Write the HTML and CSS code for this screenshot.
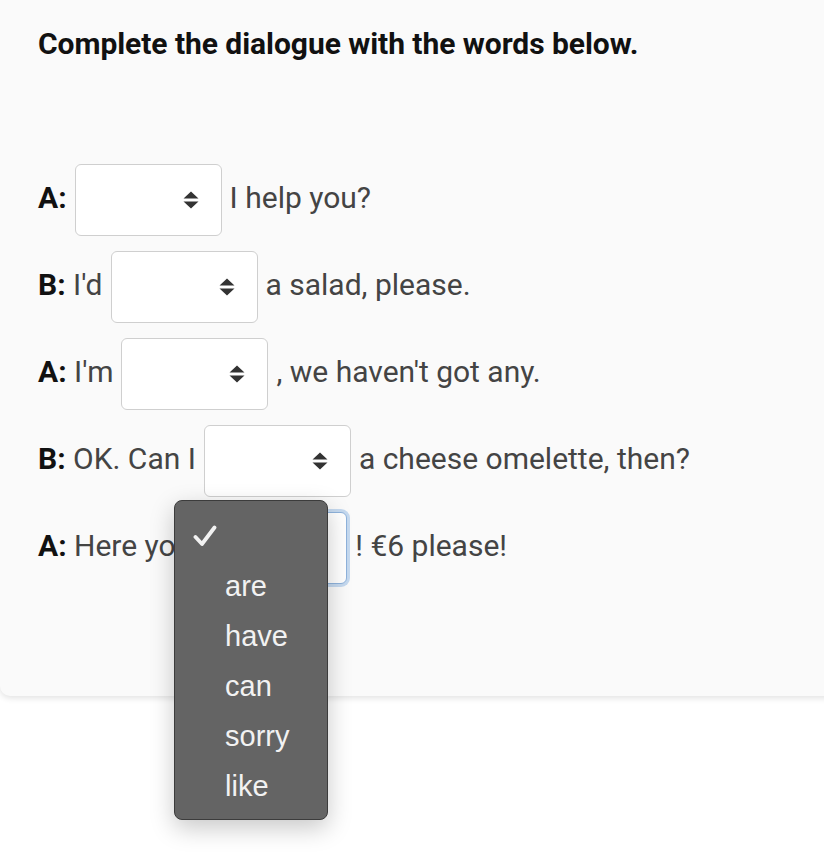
FILE: index.html
```html
<!DOCTYPE html>
<html>
<head>
<meta charset="utf-8">
<link rel="stylesheet" href="styles.css">
</head>
<body>
<div class="card">
  <h1 class="title">Complete the dialogue with the words below.</h1>
  <div class="dialogue">
    <div class="line"><span class="txt"><b>A:</b></span><span class="sel"><svg class="arr" viewBox="0 0 16 18" width="16" height="18"><path d="M8 0.5 L15.5 7.5 H0.5 Z M8 17.5 L15.5 10.5 H0.5 Z" fill="#333"/></svg></span><span class="txt">I help you?</span></div>
    <div class="line"><span class="txt"><b>B:</b> I'd</span><span class="sel"><svg class="arr" viewBox="0 0 16 18" width="16" height="18"><path d="M8 0.5 L15.5 7.5 H0.5 Z M8 17.5 L15.5 10.5 H0.5 Z" fill="#333"/></svg></span><span class="txt">a salad, please.</span></div>
    <div class="line"><span class="txt"><b>A:</b> I'm</span><span class="sel"><svg class="arr" viewBox="0 0 16 18" width="16" height="18"><path d="M8 0.5 L15.5 7.5 H0.5 Z M8 17.5 L15.5 10.5 H0.5 Z" fill="#333"/></svg></span><span class="txt">, we haven't got any.</span></div>
    <div class="line"><span class="txt"><b>B:</b> OK. Can I</span><span class="sel"><svg class="arr" viewBox="0 0 16 18" width="16" height="18"><path d="M8 0.5 L15.5 7.5 H0.5 Z M8 17.5 L15.5 10.5 H0.5 Z" fill="#333"/></svg></span><span class="txt">a cheese omelette, then?</span></div>
    <div class="line"><span class="txt"><b>A:</b> Here you</span><span class="sel focus"><svg class="arr" viewBox="0 0 16 18" width="16" height="18"><path d="M8 0.5 L15.5 7.5 H0.5 Z M8 17.5 L15.5 10.5 H0.5 Z" fill="#333"/></svg></span><span class="txt">! €6 please!</span></div>
  </div>
</div>
<div class="menu">
  <div class="opt check"><svg viewBox="0 0 24 22" width="24" height="22"><path d="M2.5 12 L9 19 L21.5 2.5" fill="none" stroke="#f2f2f2" stroke-width="3.8" stroke-linecap="round" stroke-linejoin="round"/></svg></div>
  <div class="opt">are</div>
  <div class="opt">have</div>
  <div class="opt">can</div>
  <div class="opt">sorry</div>
  <div class="opt">like</div>
</div>
</body>
</html>
```

FILE: styles.css
```css
html, body {
  margin: 0;
  padding: 0;
  background: #ffffff;
}
body {
  font-family: Roboto, "Liberation Sans", sans-serif;
  width: 824px;
  height: 854px;
  overflow: hidden;
  position: relative;
}
.card {
  background: #fafafa;
  margin-right: -40px;
  height: 696px;
  box-sizing: border-box;
  border-bottom-left-radius: 10px;
  box-shadow: 0 2px 6px rgba(0,0,0,0.12);
  padding: 25px 0 0 38px;
}
.title {
  margin: 0;
  font-size: 30px;
  font-weight: 700;
  color: #111;
  line-height: 38px;
  letter-spacing: -0.05px;
}
.dialogue {
  margin-top: 101px;
  display: flex;
  flex-direction: column;
  gap: 15px;
}
.line {
  display: flex;
  align-items: center;
  height: 72px;
  font-size: 30px;
  color: #444;
  white-space: pre;
}
.txt {
  position: relative;
  top: -3px;
}
.txt b {
  color: #111;
  font-weight: 700;
}
.sel {
  display: inline-flex;
  align-items: center;
  justify-content: flex-end;
  box-sizing: border-box;
  width: 147px;
  height: 72px;
  margin: 0 8px;
  border: 1.5px solid #cfcfcf;
  border-radius: 6px;
  background: #fff;
  padding-right: 22px;
}
.sel.focus {
  border-color: #8fb3dc;
  box-shadow: 0 0 0 3px #c5d9ef;
}
.menu {
  position: absolute;
  left: 174px;
  top: 500px;
  width: 154px;
  height: 320px;
  box-sizing: border-box;
  background: #646464;
  border: 1px solid #3c3c3c;
  border-radius: 8px;
  box-shadow: 0 8px 24px rgba(0,0,0,0.22);
  padding-top: 10px;
  font-family: "Liberation Sans", Arial, sans-serif;
  font-size: 29px;
  color: #f2f2f2;
}
.opt {
  height: 50px;
  line-height: 50px;
  padding-left: 50px;
}
.opt.check {
  padding-left: 18px;
  display: flex;
  align-items: center;
}
```
